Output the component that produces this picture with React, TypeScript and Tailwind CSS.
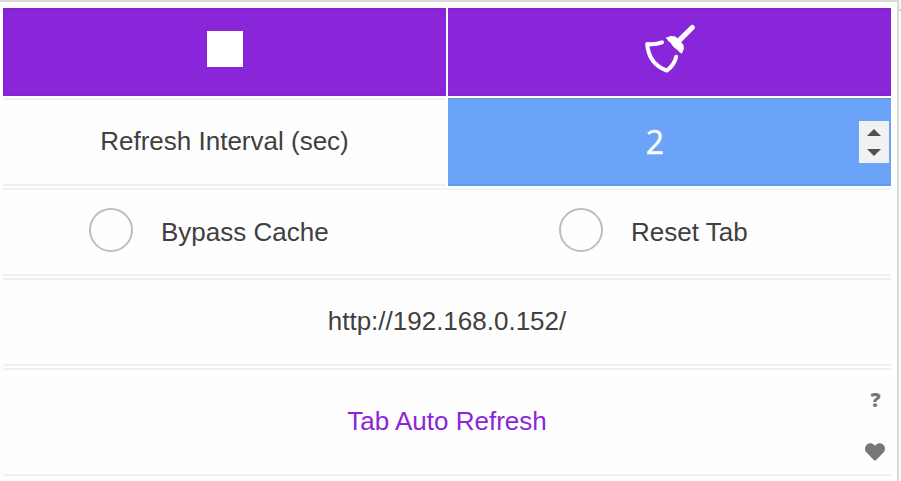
import React from "react";
import { FaHeart } from "react-icons/fa";

const cell = "border-y-2 border-[#f1f1f1]";

function Option({ label, className }: { label: string; className: string }) {
  return (
    <label className={`flex items-center pb-1 ${className}`}>
      <span className="h-11 w-11 rounded-full border-2 border-[#bdbdbd]" />
      <span className="ml-7 mt-1 whitespace-nowrap">{label}</span>
    </label>
  );
}

function Broom() {
  return (
    <svg width="52" height="52" viewBox="0 0 52 52" fill="none" stroke="#fff" strokeLinecap="round" strokeLinejoin="round">
      <path d="M48.3 4.5L35.5 17.2" strokeWidth="5.2" />
      <path d="M22.6 14.9Q27 12 32 14.2L39 21.8Q40.4 26 37.6 30.2Q35.3 29.4 33.6 26.6Q28.8 24 27 19.8Q23.8 17.8 22.6 14.9Z" fill="#fff" strokeWidth="0.8" />
      <path d="M18 19.4Q10.5 22.2 3.2 20.9Q4.6 41 22.8 47.6Q30 42.5 32.2 33.8" strokeWidth="4" />
    </svg>
  );
}

export default function App() {
  return (
    <div className="flex h-[481px] w-[901px] overflow-hidden bg-[#fefefe] font-['Liberation_Sans',Arial,sans-serif] text-[26px] leading-[30px] text-[#404040]">
      <main className="h-full w-[899px] border-r-2 border-t-2 border-[#d9d9d9] pl-[3px] pr-1.5 pt-1.5">
        <div className="grid grid-cols-2 grid-rows-[88px_88px_88px_88px_108px] gap-0.5">
          <button className="flex items-center justify-center border-y-2 border-[#8524d0] bg-[#8a26d9] pb-1.5">
            <span className="h-9 w-9 bg-white" />
          </button>
          <button className="flex items-center justify-center border-y-2 border-[#8524d0] bg-[#8a26d9] pb-1.5">
            <Broom />
          </button>

          <div className={`flex items-center justify-center pb-0.5 ${cell}`}>
            <span className="whitespace-nowrap">Refresh Interval (sec)</span>
          </div>
          <div className="flex items-center border-y-2 border-[#6199ec] bg-[#6ba3f9] pr-0.5">
            <span className="flex-1 pl-[3px] text-center font-['Open_Sans','Noto_Sans',sans-serif] text-[32px] font-medium leading-10 text-white [-webkit-text-stroke:0.4px_white]">2</span>
            <span className="flex h-[42px] w-[30px] flex-col items-center justify-center gap-[13px] bg-[#f1f1f1]">
              <svg width="14" height="7" viewBox="0 0 14 7" fill="#505050"><path d="M7 0L14 7H0Z" /></svg>
              <svg width="14" height="7" viewBox="0 0 14 7" fill="#505050"><path d="M0 0H14L7 7Z" /></svg>
            </span>
          </div>

          <div className={`col-span-2 grid grid-cols-2 ${cell}`}>
            <Option label="Bypass Cache" className="pl-[86px]" />
            <Option label="Reset Tab" className="pl-28" />
          </div>

          <div className={`col-span-2 flex items-center justify-center pb-0.5 ${cell}`}>
            <span>http://192.168.0.152/</span>
          </div>

          <footer className={`col-span-2 flex items-center ${cell}`}>
            <span className="flex-1 pb-0.5 pl-8 text-center text-[#8a26d9]">Tab Auto Refresh</span>
            <span className="flex w-8 flex-col items-center gap-[33px] pt-[9px] text-[#777]">
              <span className="ml-px h-[18px] font-['Open_Sans','Noto_Sans',sans-serif] text-[20px] font-extrabold leading-[18px]">?</span>
              <FaHeart size={20} />
            </span>
          </footer>
        </div>
      </main>
      <aside className="flex-1 bg-[#f7f7f7] pt-[9px]">
        <div className="h-0.5 bg-[#d2d2d2]" />
        <div className="h-full bg-[#fefefe]" />
      </aside>
    </div>
  );
}
